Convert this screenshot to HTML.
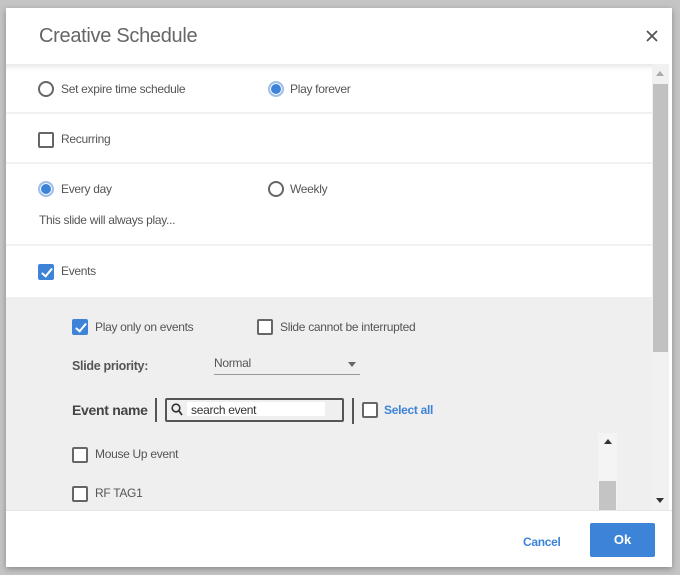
<!DOCTYPE html>
<html><head><style>
*{box-sizing:border-box;margin:0;padding:0}
body{width:680px;height:575px;background:#c4c4c4;font-family:"Liberation Sans",sans-serif;position:relative;overflow:hidden;color:#444}
.dlg{position:absolute;left:6px;top:8px;width:666px;height:559px;background:#fff;box-shadow:0 2px 6px rgba(0,0,0,.3)}
.hd{position:absolute;left:0;top:0;width:666px;height:56px}
.hd h1{position:absolute;left:33px;top:17px;font-weight:normal;font-size:20px;color:#666;letter-spacing:-0.3px}
.body{position:absolute;left:0;top:56px;width:646px;height:446px;overflow:hidden;box-shadow:inset 0 6px 6px -4px rgba(0,0,0,.12)}
.row{position:absolute;left:0;width:646px;border-bottom:2px solid #f1f1f1}
.t{position:absolute;font-size:12px;color:#555;letter-spacing:-0.3px}
.rad{position:absolute;width:16px;height:16px;border:2px solid #666;border-radius:50%}
.rad.on{border:2px solid #9fc0e8;background:#3d84d9;box-shadow:inset 0 0 0 1px #fff}
.cb{position:absolute;width:16px;height:16px;border:2px solid #666;border-radius:2px;background:#fff}
.cb.on{background:#3d84d9;border-color:#3d84d9}
.cb.on:after{content:"";position:absolute;left:4px;top:0px;width:4px;height:9px;border:solid #fff;border-width:0 2px 2px 0;transform:rotate(40deg)}
.grey{position:absolute;left:0;top:233px;width:646px;height:213px;background:#efefef}
.sb{position:absolute;left:646px;top:56px;width:17px;height:446px;background:#f1f1f1}
.ft{position:absolute;left:0;top:502px;width:666px;height:57px;border-top:1px solid #e6e6e6}
</style></head><body>
<div class="dlg">
<div class="hd"><h1>Creative Schedule</h1>
<svg style="position:absolute;left:640px;top:22px" width="12" height="12"><path d="M1 1L11 11M11 1L1 11" stroke="#555" stroke-width="1.8"/></svg></div>
<div class="body">
<div class="row" style="top:0;height:50px">
<div class="rad" style="left:32px;top:17px"></div><div class="t" style="left:55px;top:18px">Set expire time schedule</div>
<div class="rad on" style="left:262px;top:17px"></div><div class="t" style="left:284px;top:18px">Play forever</div></div>
<div class="row" style="top:50px;height:50px">
<div class="cb" style="left:32px;top:18px"></div><div class="t" style="left:55px;top:18px">Recurring</div></div>
<div class="row" style="top:100px;height:82px">
<div class="rad on" style="left:32px;top:17px"></div><div class="t" style="left:55px;top:18px">Every day</div>
<div class="rad" style="left:262px;top:17px"></div><div class="t" style="left:284px;top:18px">Weekly</div>
<div class="t" style="left:33px;top:49px">This slide will always play...</div></div>
<div class="row" style="top:182px;height:51px;border:none">
<div class="cb on" style="left:32px;top:18px"></div><div class="t" style="left:55px;top:18px">Events</div></div>
<div class="grey">
<div class="cb on" style="left:66px;top:22px"></div><div class="t" style="left:89px;top:23px">Play only on events</div>
<div class="cb" style="left:251px;top:22px"></div><div class="t" style="left:274px;top:23px">Slide cannot be interrupted</div>
<div class="t" style="left:66px;top:62px;font-weight:bold;font-size:12.5px">Slide priority:</div>
<div class="t" style="left:208px;top:59px">Normal</div>
<div style="position:absolute;left:342px;top:65px;border:4px solid transparent;border-top:5px solid #666"></div>
<div style="position:absolute;left:208px;top:77px;width:146px;height:1px;background:#999"></div>
<div class="t" style="left:66px;top:105px;font-weight:bold;font-size:14px;color:#444">Event name</div>
<div style="position:absolute;left:149px;top:101px;width:2px;height:24px;background:#555"></div>
<div style="position:absolute;left:159px;top:101px;width:179px;height:24px;border:2px solid #555;border-radius:2px;background:#efefef"></div>
<svg style="position:absolute;left:165px;top:106px" width="12" height="13"><circle cx="5" cy="5" r="3.8" fill="none" stroke="#333" stroke-width="1.6"/><path d="M8 8 L11 12" stroke="#333" stroke-width="1.8"/></svg>
<div style="position:absolute;left:181px;top:105px;width:138px;height:14px;background:#fff"></div>
<div class="t" style="left:185px;top:106px;color:#333">search event</div>
<div style="position:absolute;left:346px;top:101px;width:2px;height:26px;background:#555"></div>
<div class="cb" style="left:356px;top:105px"></div><div class="t" style="left:378px;top:106px;color:#3d84d9;font-weight:bold">Select all</div>
<div class="cb" style="left:66px;top:150px"></div><div class="t" style="left:89px;top:150px">Mouse Up event</div>
<div class="cb" style="left:66px;top:189px"></div><div class="t" style="left:89px;top:189px">RF TAG1</div>
<div style="position:absolute;left:592px;top:136px;width:19px;height:77px;background:#f4f4f4"></div>
<div style="position:absolute;left:598px;top:142px;border:4px solid transparent;border-bottom:5px solid #333;border-top:0"></div>
<div style="position:absolute;left:593px;top:184px;width:17px;height:29px;background:#c4c4c4"></div>
</div>
</div>
<div class="sb"><div style="position:absolute;left:4px;top:7px;border:4px solid transparent;border-bottom:5px solid #aaa;border-top:0"></div>
<div style="position:absolute;left:1px;top:20px;width:15px;height:268px;background:#c1c1c1"></div>
<div style="position:absolute;left:4px;top:434px;border:4px solid transparent;border-top:5px solid #333;border-bottom:0"></div></div>
<div class="ft">
<div class="t" style="left:517px;top:24px;color:#3d84d9;font-weight:bold">Cancel</div>
<div style="position:absolute;left:584px;top:12px;width:65px;height:34px;background:#3d84d9;color:#fff;font-weight:bold;font-size:13px;text-align:center;line-height:34px;border-radius:2px">Ok</div>
</div>
</div>
</body></html>
